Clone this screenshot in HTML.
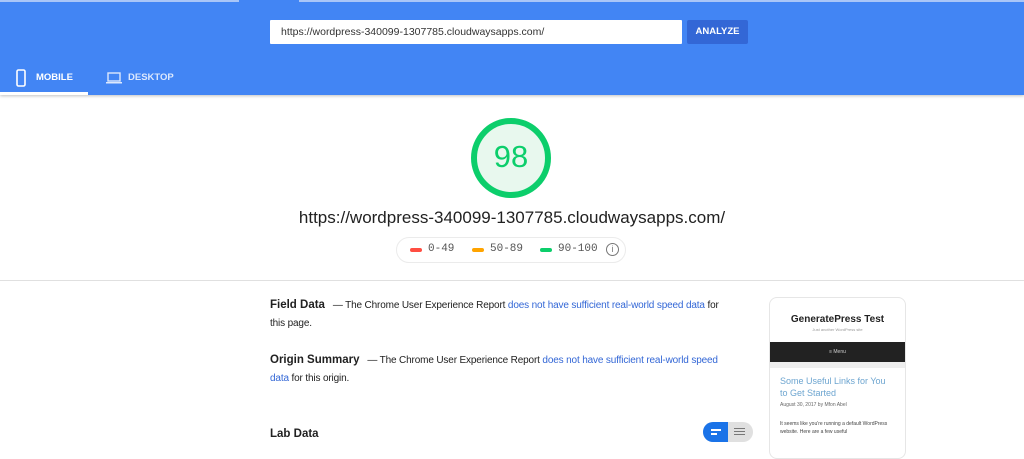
<!DOCTYPE html>
<html><head><style>
body{margin:0;width:1024px;height:439px;overflow:hidden;background:#fff;font-family:"Liberation Sans",sans-serif;position:relative}
.a{position:absolute;white-space:nowrap}
.hdr{left:0;top:0;width:1024px;height:95px;background:#4285f4;box-shadow:0 1px 3px rgba(0,0,0,.25)}
.p{font-size:10px;letter-spacing:-0.15px;color:#212121;line-height:18px}
.b{font-weight:bold;font-size:11.5px;letter-spacing:0}
.l{color:#3367d6}
</style></head><body>
<div class="a hdr"></div>
<div class="a" style="left:0;top:0;width:239px;height:2px;background:#a9c6f8"></div>
<div class="a" style="left:299px;top:0;width:725px;height:2px;background:#a9c6f8"></div>
<div class="a" style="left:270px;top:20px;width:412px;height:24px;background:#fff;border-radius:1px"></div>
<div class="a" style="left:281px;top:26px;font-size:10.5px;color:#333">https://wordpress-340099-1307785.cloudwaysapps.com/</div>
<div class="a" style="left:687px;top:20px;width:61px;height:24px;background:#3367d6;border-radius:2px;color:#fff;font-size:9.5px;font-weight:bold;text-align:center;line-height:24px">ANALYZE</div>
<svg class="a" style="left:16px;top:69px" width="10" height="18"><rect x="1" y="1" width="8" height="16" rx="1.5" fill="none" stroke="#fff" stroke-width="1.6"/></svg>
<div class="a" style="left:36px;top:72px;font-size:9.5px;font-weight:bold;color:#fff">MOBILE</div>
<svg class="a" style="left:106px;top:72px" width="16" height="12"><rect x="2" y="1" width="12" height="8" fill="none" stroke="#dce8fd" stroke-width="1.4"/><rect x="0" y="10" width="16" height="1.5" fill="#dce8fd"/></svg>
<div class="a" style="left:128px;top:72px;font-size:9.5px;font-weight:bold;color:#dce8fd">DESKTOP</div>
<div class="a" style="left:0;top:92px;width:88px;height:3px;background:#fff"></div>
<svg class="a" style="left:469px;top:116px" width="84" height="84"><circle cx="42" cy="42" r="37" fill="#e8f8ee" stroke="#0cce6b" stroke-width="6"/></svg>
<div class="a" style="left:469px;top:139px;width:84px;text-align:center;font-size:31px;color:#0cce6b">98</div>
<div class="a" style="left:262px;top:208px;width:500px;text-align:center;font-size:17px;color:#212121">https://wordpress-340099-1307785.cloudwaysapps.com/</div>
<div class="a" style="left:396px;top:237px;width:230px;height:26px;border:1px solid #ebebeb;border-radius:14px;box-sizing:border-box"></div>
<div class="a" style="left:410px;top:248px;width:12px;height:4px;border-radius:2px;background:#ff4e42"></div>
<div class="a" style="left:428px;top:243px;font-family:'Liberation Mono',monospace;font-size:11px;color:#555">0-49</div>
<div class="a" style="left:472px;top:248px;width:12px;height:4px;border-radius:2px;background:#ffa400"></div>
<div class="a" style="left:490px;top:243px;font-family:'Liberation Mono',monospace;font-size:11px;color:#555">50-89</div>
<div class="a" style="left:540px;top:248px;width:12px;height:4px;border-radius:2px;background:#0cce6b"></div>
<div class="a" style="left:558px;top:243px;font-family:'Liberation Mono',monospace;font-size:11px;color:#555">90-100</div>
<div class="a" style="left:606px;top:243px;width:11px;height:11px;border:1.3px solid #777;border-radius:50%;font-size:9px;color:#777;text-align:center;line-height:11px">i</div>
<div class="a" style="left:0;top:280px;width:1024px;height:1px;background:#e0e0e0"></div>
<div class="a p" style="left:270px;top:296px"><span class="b">Field Data</span> &nbsp;&nbsp;— The Chrome User Experience Report <span class="l">does not have sufficient real-world speed data</span> for<br>this page.</div>
<div class="a p" style="left:270px;top:351px"><span class="b">Origin Summary</span> &nbsp;&nbsp;— The Chrome User Experience Report <span class="l">does not have sufficient real-world speed</span><br><span class="l">data</span> for this origin.</div>
<div class="a b" style="left:270px;top:428px;color:#212121">Lab Data</div>
<div class="a" style="left:703px;top:422px;width:50px;height:20px;border-radius:10px;background:#e0e0e0"></div>
<div class="a" style="left:703px;top:422px;width:25px;height:20px;border-radius:10px 0 0 10px;background:#1a73e8"></div>
<div class="a" style="left:711px;top:429px;width:10px;height:2px;background:#fff"></div><div class="a" style="left:711px;top:433px;width:6px;height:2px;background:#fff"></div>
<div class="a" style="left:734px;top:428px;width:11px;height:1px;background:#777"></div><div class="a" style="left:734px;top:431px;width:11px;height:1px;background:#777"></div><div class="a" style="left:734px;top:434px;width:11px;height:1px;background:#777"></div>
<div class="a" style="left:769px;top:297px;width:135px;height:160px;border:1px solid #e6e6e6;border-radius:8px;overflow:hidden;background:#fff;white-space:normal">
<div style="text-align:center;font-size:10px;font-weight:bold;color:#222;margin-top:16px">GeneratePress Test</div>
<div style="text-align:center;font-size:4px;color:#999;margin-top:2px">Just another WordPress site</div>
<div style="background:#222;height:20px;margin-top:10px;color:#ccc;font-size:5px;text-align:center;line-height:20px">≡ Menu</div>
<div style="height:6px;background:#eee"></div>
<div style="padding:0 10px;font-size:9px;color:#6da5d0;line-height:12px;margin-top:7px">Some Useful Links for You to Get Started</div>
<div style="padding:0 10px;font-size:5px;color:#666;margin-top:3px">August 30, 2017 by Mfon Abel</div>
<div style="padding:0 10px;font-size:5px;color:#444;margin-top:12px;line-height:8px">It seems like you're running a default WordPress website. Here are a few useful</div>
</div>
</body></html>
